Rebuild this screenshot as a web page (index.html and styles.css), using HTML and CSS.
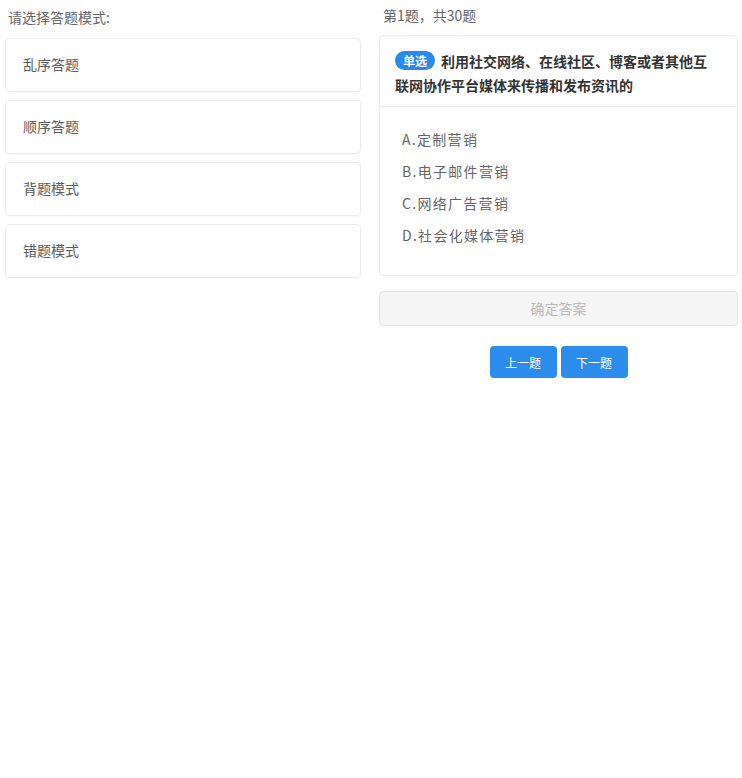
FILE: index.html
```html
<!DOCTYPE html>
<html lang="zh">
<head>
<meta charset="utf-8">
<link rel="stylesheet" href="styles.css">
</head>
<body>
<div class="page">
  <div class="left">
    <div class="title">请选择答题模式:</div>
    <div class="mode">乱序答题</div>
    <div class="mode">顺序答题</div>
    <div class="mode">背题模式</div>
    <div class="mode">错题模式</div>
  </div>
  <div class="right">
    <div class="progress">第1题，共30题</div>
    <div class="qcard">
      <div class="qhead"><span class="badge">单选</span><span class="qtext">利用社交网络、在线社区、博客或者其他互联网协作平台媒体来传播和发布资讯的</span></div>
      <div class="opts">
        <div class="opt">A.定制营销</div>
        <div class="opt">B.电子邮件营销</div>
        <div class="opt">C.网络广告营销</div>
        <div class="opt">D.社会化媒体营销</div>
      </div>
    </div>
    <div class="confirm">确定答案</div>
    <div class="nav">
      <button class="btn">上一题</button>
      <button class="btn">下一题</button>
    </div>
  </div>
</div>
</body>
</html>
```
FILE: styles.css
```css
* { box-sizing: border-box; }
body {
  margin: 0;
  background: #fff;
  font-family: "Noto Sans CJK SC", "Noto Sans", sans-serif;
  font-size: 14px;
  color: #555;
}
.page {
  display: grid;
  grid-template-columns: 356px 359px;
  column-gap: 18px;
  padding: 0 4px 0 5px;
}
.title {
  height: 34px;
  line-height: 34px;
  padding-left: 3px;
  color: #666;
  margin-bottom: 4px;
}
.mode {
  height: 54px;
  border: 1px solid #ececec;
  border-radius: 4px;
  padding-left: 17px;
  line-height: 51px;
  color: #5c5c5c;
  margin-bottom: 8px;
  box-shadow: 0 1px 2px rgba(0,0,0,0.03);
}
.progress {
  height: 31px;
  line-height: 31px;
  padding-left: 4px;
  color: #666;
  margin-bottom: 4px;
}
.qcard {
  border: 1px solid #ececec;
  border-radius: 4px;
  height: 241px;
}
.qhead {
  padding: 13px 24px 10px 15px;
  line-height: 24px;
  font-weight: bold;
  color: #333;
  border-bottom: 1px solid #ececec;
  height: 71px;
}
.badge {
  display: inline-block;
  background: #2a8aeb;
  color: #fff;
  border-radius: 10px;
  height: 19px;
  line-height: 19px;
  padding: 0 8px;
  margin-right: 6px;
  font-size: 12px;
  vertical-align: 1px;
}
.opts {
  padding: 16px 22px 0 22px;
}
.opt {
  height: 32px;
  line-height: 32px;
  letter-spacing: 1.3px;
  color: #666;
}
.confirm {
  margin-top: 15px;
  height: 35px;
  line-height: 33px;
  text-align: center;
  background: #f5f5f5;
  border: 1px solid #e3e3e3;
  border-radius: 4px;
  color: #bbb;
}
.nav {
  display: flex;
  justify-content: center;
  gap: 4px;
  margin-top: 20px;
}
.btn {
  width: 67px;
  height: 32px;
  border: none;
  border-radius: 4px;
  background: #2b8ceb;
  color: #fff;
  font-family: inherit;
  font-size: 12px;
  padding: 0;
}
```
